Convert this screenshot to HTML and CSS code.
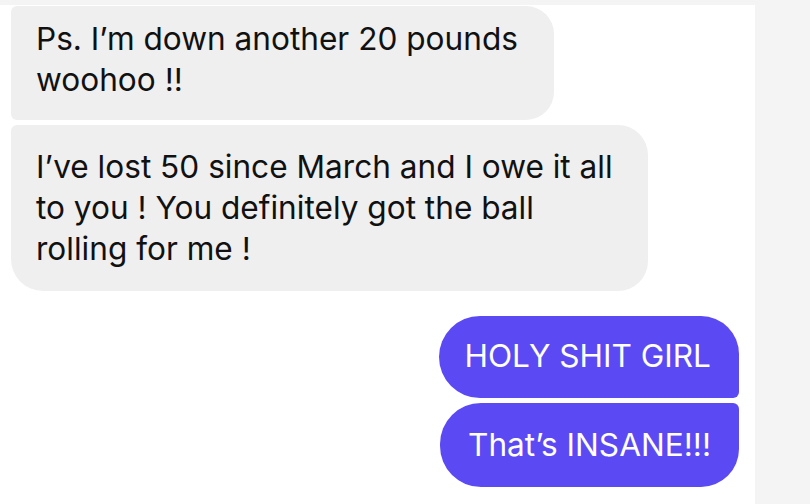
FILE: index.html
```
<!DOCTYPE html>
<html lang="en">
<head>
<meta charset="UTF-8" />
<meta name="viewport" content="width=device-width, initial-scale=1" />
<title>Messages</title>
<link rel="stylesheet" href="styles.css">
</head>
<body>
<div class="chat">

  <div class="bubble in first">Ps. I’m down another 20 pounds<br>woohoo !!</div>
  <div class="bubble in last">I’ve lost 50 since March and I owe it all<br>to you ! You definitely got the ball<br>rolling for me !</div>

  <div class="bubble out first">HOLY SHIT GIRL</div>
  <div class="bubble out last">That’s INSANE!!!</div>

</div>
</body>
</html>
```

FILE: styles.css
```
body {
  margin: 0;
  background-color: #f4f4f4;
  font-family: Inter, "Open Sans", sans-serif;
}

.chat {
  width: 755px;
  height: 499px;
  margin-top: 5px;
  padding-top: 1px;
  box-sizing: border-box;
  background-color: white;
  display: flex;
  flex-direction: column;
  gap: 5px;
}

.bubble {
  width: fit-content;
  font-size: 31.6px;
  line-height: 41px;
}

.in {
  margin-left: 11px;
  background-color: #efefef;
  color: #111;
}

.in.first {
  padding: 12px 36px 20px 25px;
  border-radius: 6px 28px 28px 6px;
}

.in.last {
  padding: 21px 35px 22px 25px;
  border-radius: 6px 30px 30px 32px;
}

.out {
  align-self: flex-end;
  margin-right: 16px;
  background-color: #5b4af4;
  color: white;
}

.out.first {
  margin-top: 20px;
  padding: 19px 28px 22px 25px;
  border-radius: 41px 38px 6px 41px;
}

.out.last {
  padding: 21px 28px 22px 28px;
  border-radius: 41px 6px 38px 41px;
}
```
